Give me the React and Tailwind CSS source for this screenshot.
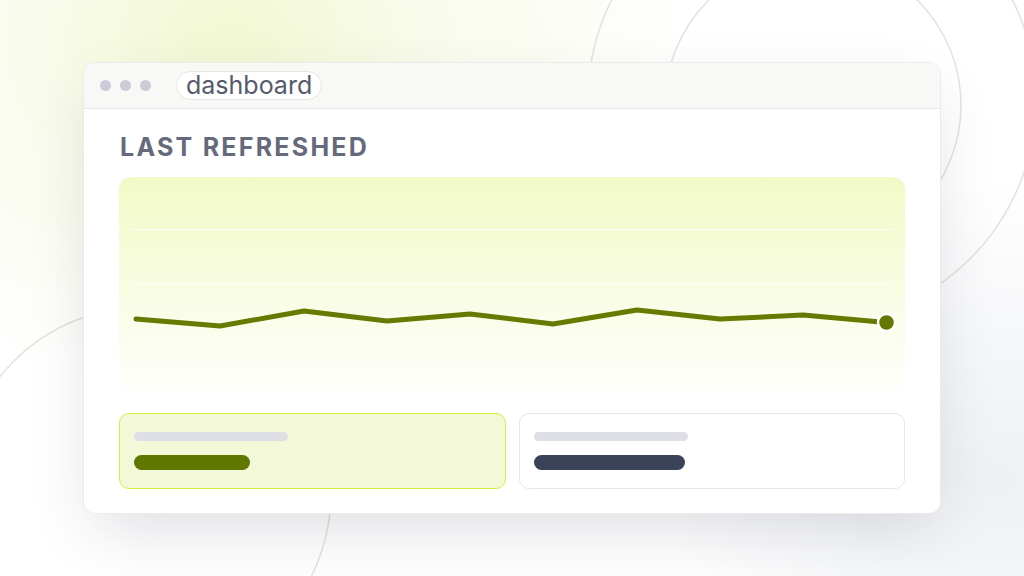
import React from "react";

const points = [
    [17, 142], [101, 149], [185, 134], [268, 144], [351, 137],
    [434, 147], [518, 133], [601, 142], [684, 138], [767, 145.5],
];

function Chart() {
    const d = points.map(([x, y], i) => `${i === 0 ? "M" : "L"}${x} ${y}`).join(" ");
    return (
        <div className="h-[213px] w-full rounded-xl bg-gradient-to-b from-[#f2f9c6] to-[#fefffb]">
            <svg width="786" height="213" viewBox="0 0 786 213" className="block">
                {/* grid */}
                <line x1="12" y1="52.5" x2="774" y2="52.5" stroke="#ffffff" strokeOpacity="0.9" strokeWidth="1.2" />
                <line x1="12" y1="106.5" x2="774" y2="106.5" stroke="#ffffff" strokeOpacity="0.8" strokeWidth="1.2" />
                <line x1="12" y1="159.5" x2="774" y2="159.5" stroke="#ffffff" strokeOpacity="0.5" strokeWidth="1" />
                <path d={d} fill="none" stroke="#667a00" strokeWidth="5" strokeLinecap="round" strokeLinejoin="round" />
                <circle cx="767.5" cy="145.5" r="8.5" fill="#627800" stroke="#ffffff" strokeWidth="2.5" />
            </svg>
        </div>
    );
}

function StatCard({ active }) {
    return (
        <div
            className={`flex h-[76px] flex-1 flex-col rounded-[10px] border px-[14px] pt-[18px] ${active ? "border-[#d5ef3e] bg-[#f2f8d8]" : "border-[#e8e8e0] bg-white"
                }`}
        >
            <div className="h-[9px] w-[154px] rounded-full bg-[#dedfe5]" />
            <div
                className={`mt-[14px] h-[15px] rounded-full ${active ? "w-[116px] bg-[#617800]" : "w-[151px] bg-[#3b4358]"}`}
            />
        </div>
    );
}

export default function App() {
    return (
        <div
            className="relative flex h-[576px] w-[1024px] items-center justify-center overflow-hidden bg-white bg-[radial-gradient(ellipse_460px_360px_at_230px_40px,#f1f8d2_0%,rgba(245,250,226,0.65)_45%,rgba(255,255,255,0)_100%),radial-gradient(ellipse_340px_300px_at_1000px_480px,#eef0f3_0%,rgba(255,255,255,0)_100%)]"
            style={{ fontFamily: "Inter, 'Noto Sans', sans-serif" }}
        >
            {/* background rings */}
            <svg className="absolute inset-0" width="1024" height="576" viewBox="0 0 1024 576">
                <circle cx="812" cy="100" r="224" fill="none" stroke="#e3e3dc" strokeWidth="1.5" />
                <circle cx="813" cy="105" r="148" fill="none" stroke="#e3e3dc" strokeWidth="1.5" />
                <circle cx="145" cy="493" r="186" fill="none" stroke="#e3e3dc" strokeWidth="1.5" />
            </svg>

            {/* window */}
            <div className="relative z-10 flex h-[452px] w-[858px] flex-col overflow-hidden rounded-xl border border-[#ebebe7] bg-white shadow-[0_24px_60px_-12px_rgba(30,40,60,0.16)]">
                <div className="flex h-[46px] items-center border-b border-[#e8e8e4] bg-[#f8f8f6] pl-4">
                    <div className="flex items-center gap-[9px]">
                        <span className="h-[11px] w-[11px] rounded-full bg-[#cbccd8]" />
                        <span className="h-[11px] w-[11px] rounded-full bg-[#cbccd8]" />
                        <span className="h-[11px] w-[11px] rounded-full bg-[#cbccd8]" />
                    </div>
                    <div className="ml-[25px] flex h-[29px] items-center rounded-full border border-[#e6e6e0] bg-white px-[9px] text-[25px] leading-none text-[#555b6b]">
                        dashboard
                    </div>
                </div>

                <div className="flex flex-col px-[35px] pt-[26px]">
                    <div className="pl-px text-[25px] font-bold leading-none tracking-[0.09em] text-[#646a7b]">
                        LAST REFRESHED
                    </div>
                    <div className="mt-[17px]">
                        <Chart />
                    </div>
                    <div className="mt-[23px] flex gap-[13px]">
                        <StatCard active />
                        <StatCard />
                    </div>
                </div>
            </div>
        </div>
    );
}
